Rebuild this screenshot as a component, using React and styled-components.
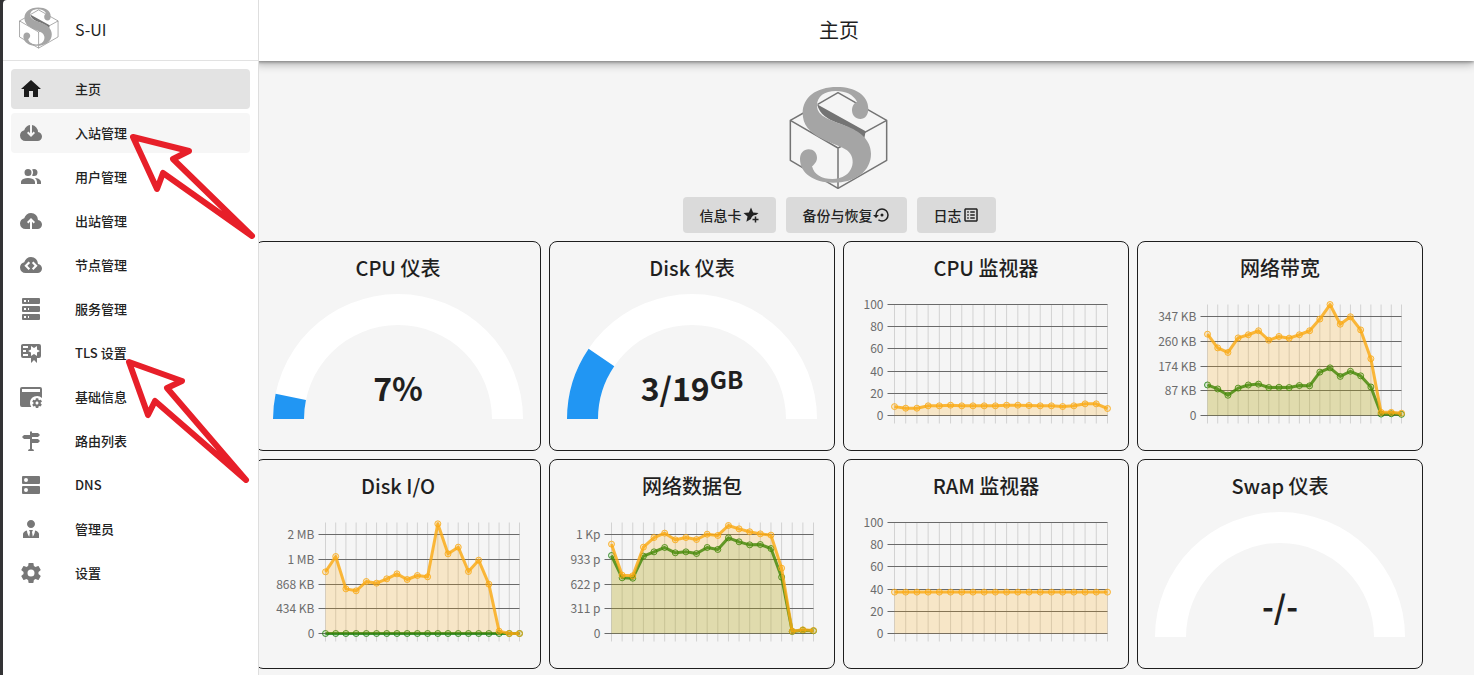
import React from "react";
import styled, { createGlobalStyle } from "styled-components";

const GlobalStyle = createGlobalStyle`
  *, *::before, *::after { box-sizing: border-box; }
  body {
    margin: 0;
    background: #f5f5f5;
    color: #1f1f1f;
    font-family: "Noto Sans CJK SC", "Noto Sans", sans-serif;
  }
`;

const Shell = styled.div`
  position: relative;
  display: flex;
  min-height: 100vh;
  padding-left: 3px;
  background: #333335;
`;

const Sidebar = styled.aside`
  position: relative;
  z-index: 2;
  flex: 0 0 256px;
  background: #fff;
  border-right: 1px solid #dedede;
  border-top-left-radius: 4px;
`;

const Brand = styled.div`
  display: flex;
  align-items: center;
  gap: 16px;
  height: 61px;
  padding: 0 16px 4px;
  border-bottom: 1px solid #e2e2e2;
  font-size: 16px;
  line-height: 24px;
`;

const BrandMark = styled.span`
  display: flex;
  width: 40px;

  svg { width: 40px; height: 42px; }
`;

const BrandName = styled.span`
  padding-top: 2px;
`;

const Nav = styled.nav`
  display: flex;
  flex-direction: column;
  gap: 4px;
  padding: 8px;
`;

const NavLink = styled.a`
  display: flex;
  align-items: center;
  gap: 32px;
  height: 40px;
  padding: 0 8px;
  border-radius: 4px;
  background: ${(p) => (p.$state === "active" ? "#e3e3e3" : p.$state === "hover" ? "#f6f6f6" : "transparent")};
  color: #222;
  font-size: 13px;
  font-weight: 500;
  line-height: 20px;
  text-decoration: none;

  svg { color: ${(p) => (p.$state === "active" ? "#1c1c1c" : "#777")}; }
`;

const IconSvg = styled.svg`
  flex: none;
  width: ${(p) => p.$size}px;
  height: ${(p) => p.$size}px;
  fill: currentColor;
  fill-rule: evenodd;
`;

const Content = styled.div`
  flex: 1;
  min-width: 0;
  margin-left: -4px;
  background: #f5f5f5;
`;

const TopBar = styled.header`
  position: relative;
  display: flex;
  align-items: center;
  justify-content: center;
  height: 61px;
  padding: 0 51px 2px 0;
  background: #fff;
  box-shadow: 0 1px 3px rgba(0, 0, 0, 0.35), 0 3px 9px rgba(0, 0, 0, 0.3);
`;

const PageTitle = styled.h1`
  margin: 0;
  font-size: 20px;
  font-weight: 400;
  line-height: 28px;
`;

const Main = styled.main`
  display: flex;
  flex-direction: column;
  align-items: center;
  gap: 8px;
  padding: 26px 51px 6px 0;
`;

const HeroLogo = styled.div`
  display: flex;

  svg { width: 100px; height: 102px; }
`;

const Actions = styled.div`
  display: flex;
  gap: 10px;
`;

const ActionButton = styled.button`
  display: flex;
  align-items: center;
  height: 36px;
  padding: 0 16px 0 17px;
  border: 0;
  border-radius: 4px;
  background: #dadada;
  color: #222;
  font: 500 14px/20px "Noto Sans CJK SC", sans-serif;
`;

const Grid = styled.div`
  align-self: stretch;
  display: grid;
  grid-template-columns: repeat(4, minmax(0, 1fr));
  gap: 8px;
`;

const Card = styled.section`
  border: 1px solid #1e1e1e;
  border-radius: 8px;
  padding-top: 10px;
`;

const CardTitle = styled.h2`
  margin: 0;
  font-size: 20px;
  font-weight: 500;
  line-height: 32px;
  text-align: center;
`;

const Figure = styled.svg`
  display: block;
  width: 100%;
  height: auto;
`;

const AxisLabel = styled.text`
  font-size: 12px;
  fill: #6c6c6c;
  text-anchor: end;
`;

const GaugeValue = styled.text`
  font-size: 32px;
  font-weight: 700;
  fill: #1f1f1f;
  text-anchor: middle;
`;

const GaugeUnit = styled.tspan`
  font-size: 24px;
`;

const Annotations = styled.svg`
  position: absolute;
  z-index: 3;
  top: 0;
  left: 0;
  width: 260px;
  height: 500px;
  pointer-events: none;
  fill: none;
  stroke: #e71f29;
  stroke-width: 6;
  stroke-linejoin: round;
`;

const icons = {
  home: "M10,20V14H14V20H19V12H22L12,3L2,12H5V20H10Z",
  download:
    "M6.5 20Q4.22 20 2.61 18.43 1 16.85 1 14.58 1 12.63 2.17 11.1 3.35 9.57 5.25 9.15 5.83 7.13 7.39 5.75 8.95 4.38 11 4.08V12.15L9.4 10.6L8 12L12 16L16 12L14.6 10.6L13 12.15V4.08Q15.58 4.43 17.29 6.39 19 8.35 19 11 20.73 11.2 21.86 12.5 23 13.78 23 15.5 23 17.38 21.69 18.69 20.38 20 18.5 20Z",
  users:
    "M16 17V19H2V17S2 13 9 13 16 17 16 17M12.5 7.5A3.5 3.5 0 1 0 9 11A3.5 3.5 0 0 0 12.5 7.5M15.94 13A5.32 5.32 0 0 1 18 17V19H22V17S22 13.37 15.94 13M15 4A3.39 3.39 0 0 0 13.07 4.59A5 5 0 0 1 13.07 10.41A3.39 3.39 0 0 0 15 11A3.5 3.5 0 0 0 15 4Z",
  upload:
    "M11 20H6.5Q4.22 20 2.61 18.43 1 16.85 1 14.58 1 12.63 2.17 11.1 3.35 9.57 5.25 9.15 5.88 6.85 7.75 5.43 9.63 4 12 4 14.93 4 16.96 6.04 19 8.07 19 11 20.73 11.2 21.86 12.5 23 13.78 23 15.5 23 17.38 21.69 18.69 20.38 20 18.5 20H13V12.85L14.6 14.4L16 13L12 9L8 13L9.4 14.4L11 12.85Z",
  tags:
    "M6.5 20Q4.22 20 2.61 18.43 1 16.85 1 14.58 1 12.63 2.17 11.1 3.35 9.57 5.25 9.15 5.88 6.85 7.75 5.43 9.63 4 12 4 14.93 4 16.96 6.04 19 8.07 19 11 20.73 11.2 21.86 12.5 23 13.78 23 15.5 23 17.38 21.69 18.69 20.38 20 18.5 20ZM9.6 8.5L5.4 12.7 9.6 16.9 11.1 15.4 8.4 12.7 11.1 10ZM14.4 8.5L12.9 10 15.6 12.7 12.9 15.4 14.4 16.9 18.6 12.7Z",
  server:
    "M4,1H20A1,1 0 0,1 21,2V6A1,1 0 0,1 20,7H4A1,1 0 0,1 3,6V2A1,1 0 0,1 4,1M4,9H20A1,1 0 0,1 21,10V14A1,1 0 0,1 20,15H4A1,1 0 0,1 3,14V10A1,1 0 0,1 4,9M4,17H20A1,1 0 0,1 21,18V22A1,1 0 0,1 20,23H4A1,1 0 0,1 3,22V18A1,1 0 0,1 4,17M9,5H10V3H9V5M9,13H10V11H9V13M9,21H10V19H9V21M5,3V5H7V3H5M5,11V13H7V11H5M5,19V21H7V19H5Z",
  certificate:
    "M4,3C2.89,3 2,3.89 2,5V15A2,2 0 0,0 4,17H12V22L15,19L18,22V17H20A2,2 0 0,0 22,15V8L22,6V5A2,2 0 0,0 20,3H16V3H4M12,5L15,7L18,5V8.5L21,10L18,11.5V15L15,13L12,15V11.5L9,10L12,8.5V5M4,5H9V7H4V5M4,9H7V11H4V9M4,13H9V15H4V13Z",
  appCog:
    "M21.7 18.6V17.6L22.8 16.8C22.9 16.7 23 16.6 22.9 16.5L21.9 14.8C21.9 14.7 21.7 14.7 21.6 14.7L20.4 15.2C20.1 15 19.8 14.8 19.5 14.7L19.3 13.4C19.3 13.3 19.2 13.2 19.1 13.2H17.1C16.9 13.2 16.8 13.3 16.8 13.4L16.6 14.7C16.3 14.9 16.1 15 15.8 15.2L14.6 14.7C14.5 14.7 14.4 14.7 14.3 14.8L13.3 16.5C13.3 16.6 13.3 16.7 13.4 16.8L14.5 17.6V18.6L13.4 19.4C13.3 19.5 13.2 19.6 13.3 19.7L14.3 21.4C14.4 21.5 14.5 21.5 14.6 21.5L15.8 21C16 21.2 16.3 21.4 16.6 21.5L16.8 22.8C16.9 22.9 17 23 17.1 23H19.1C19.2 23 19.3 22.9 19.3 22.8L19.5 21.5C19.8 21.3 20 21.2 20.3 21L21.5 21.4C21.6 21.4 21.7 21.4 21.8 21.3L22.8 19.6C22.9 19.5 22.9 19.4 22.8 19.4L21.7 18.6M18 19.5C17.2 19.5 16.5 18.8 16.5 18S17.2 16.5 18 16.5 19.5 17.2 19.5 18 18.8 19.5 18 19.5ZM3 2A2 2 0 0 0 1 4V20A2 2 0 0 0 3 22H12.3A7 7 0 0 1 11 18A7 7 0 0 1 23 13.1V4A2 2 0 0 0 21 2ZM3 4H21V7H3Z",
  routes:
    "M11,10H5L3,8L5,6H11V3L12,2L13,3V4H19L21,6L19,8H13V10H19L21,12L19,14H13V20A2,2 0 0,1 15,22H9A2,2 0 0,1 11,20V10Z",
  dns:
    "M7,9A2,2 0 0,1 5,7A2,2 0 0,1 7,5A2,2 0 0,1 9,7A2,2 0 0,1 7,9M20,3H4A1,1 0 0,0 3,4V10A1,1 0 0,0 4,11H20A1,1 0 0,0 21,10V4A1,1 0 0,0 20,3M7,19A2,2 0 0,1 5,17A2,2 0 0,1 7,15A2,2 0 0,1 9,17A2,2 0 0,1 7,19M20,13H4A1,1 0 0,0 3,14V20A1,1 0 0,0 4,21H20A1,1 0 0,0 21,20V14A1,1 0 0,0 20,13Z",
  admin:
    "M12 3C14.21 3 16 4.79 16 7S14.21 11 12 11 8 9.21 8 7 9.79 3 12 3M16 13.54C16 14.6 15.72 17.07 13.81 19.83L13 15L13.94 13.12C13.32 13.05 12.67 13 12 13S10.68 13.05 10.06 13.12L11 15L10.19 19.83C8.28 17.07 8 14.6 8 13.54C5.61 14.24 4 15.5 4 17V21H20V17C20 15.5 18.4 14.24 16 13.54Z",
  cog:
    "M12,15.5A3.5,3.5 0 0,1 8.5,12A3.5,3.5 0 0,1 12,8.5A3.5,3.5 0 0,1 15.5,12A3.5,3.5 0 0,1 12,15.5M19.43,12.97C19.47,12.65 19.5,12.33 19.5,12C19.5,11.67 19.47,11.34 19.43,11L21.54,9.37C21.73,9.22 21.78,8.95 21.66,8.73L19.66,5.27C19.54,5.05 19.27,4.96 19.05,5.05L16.56,6.05C16.04,5.66 15.5,5.32 14.87,5.07L14.5,2.42C14.46,2.18 14.25,2 14,2H10C9.75,2 9.54,2.18 9.5,2.42L9.13,5.07C8.5,5.32 7.96,5.66 7.44,6.05L4.95,5.05C4.73,4.96 4.46,5.05 4.34,5.27L2.34,8.73C2.21,8.95 2.27,9.22 2.46,9.37L4.57,11C4.53,11.34 4.5,11.67 4.5,12C4.5,12.33 4.53,12.65 4.57,12.97L2.46,14.63C2.27,14.78 2.21,15.05 2.34,15.27L4.34,18.73C4.46,18.95 4.73,19.03 4.95,18.95L7.44,17.94C7.96,18.34 8.5,18.68 9.13,18.93L9.5,21.58C9.54,21.82 9.75,22 10,22H14C14.25,22 14.46,21.82 14.5,21.58L14.87,18.93C15.5,18.67 16.04,18.34 16.56,17.94L19.05,18.95C19.27,19.03 19.54,18.95 19.66,18.73L21.66,15.27C21.78,15.05 21.73,14.78 21.54,14.63L19.43,12.97Z",
  starPlus:
    "M5.8 21L7.4 14L2 9.2L9.2 8.6L12 2L14.8 8.6L22 9.2L18.8 12H18C14.9 12 12.4 14.3 12 17.3L5.8 21M17 14V17H14V19H17V22H19V19H22V17H19V14H17Z",
  restore:
    "M12,3A9,9 0 0,0 3,12H0L4,16L8,12H5A7,7 0 0,1 12,5A7,7 0 0,1 19,12A7,7 0 0,1 12,19C10.5,19 9.09,18.5 7.94,17.7L6.5,19.14C8.04,20.3 9.94,21 12,21A9,9 0 0,0 21,12A9,9 0 0,0 12,3M14,12A2,2 0 0,0 12,10A2,2 0 0,0 10,12A2,2 0 0,0 12,14A2,2 0 0,0 14,12Z",
  list:
    "M11 15H17V17H11V15M9 7H7V9H9V7M11 13H17V11H11V13M11 9H17V7H11V9M9 11H7V13H9V11M21 5V19C21 20.1 20.1 21 19 21H5C3.9 21 3 20.1 3 19V5C3 3.9 3.9 3 5 3H19C20.1 3 21 3.9 21 5M19 5H5V19H19V5M9 15H7V17H9V15Z",
};

function Icon({ name, size = 24 }) {
  return (
    <IconSvg $size={size} viewBox="0 0 24 24" aria-hidden="true">
      <path d={icons[name]} />
    </IconSvg>
  );
}

function Logo() {
  return (
    <svg viewBox="386 80 300 306" role="img" aria-label="S-UI">
      <g fill="none" stroke="#747474" strokeWidth="4.5" strokeLinejoin="round">
        <path d="M472 132L533 97L679 180V300L533 384L390 300V180L440 152" />
        <path d="M390 180L533 263V384M533 263L550 254M612 217L679 180" />
      </g>
      <path fill="#747474" d="M470 132L616 213L612 234C592 212 560 198 532 188C502 177 478 163 470 132Z" />
      <path
        fill="#a5a5a5"
        d="M624 146C624 104 584 80 530 80C466 80 427 112 427 158C427 192 446 216 486 236C514 250 540 256 560 270C592 294 580 356 516 356C484 356 462 344 455 318C462 312 470 304 470 292C470 277 459 267 445 267C430 267 419 279 419 296C419 338 460 367 518 367C586 367 632 332 632 280C632 238 598 212 556 196C516 180 470 170 470 136C470 108 492 92 527 92C556 92 578 102 590 124C581 128 575 138 575 150C575 165 586 176 600 176C614 176 624 164 624 146Z"
      />
    </svg>
  );
}

// Drawing area shared by every card figure.
const VIEW = "0 0 284 166";
const RIGHT = 263.5;
const TOP = 20.5;
const BASE = 131.5;

const ORANGE = { line: "rgba(250,170,20,0.82)", fill: "rgba(255,165,0,0.19)" };
const GREEN = { line: "rgba(24,128,8,0.82)", fill: "rgba(60,160,40,0.15)" };

function LineChart({ left, ticks, step, pitch, series }) {
  const count = series[0].data.length;
  const xs = Array.from({ length: count }, (_, i) => left + (i * (RIGHT - left)) / (count - 1));
  const toY = (v) => BASE - (v / step) * pitch;
  return (
    <Figure viewBox={VIEW} role="img" aria-label="chart">
      {xs.map((x) => (
        <line key={x} x1={x} x2={x} y1={TOP} y2={BASE + 8} stroke="#d2d2d2" />
      ))}
      {ticks.map((label, i) => {
        const y = Math.round(BASE - i * pitch - 0.5) + 0.5;
        return (
          <g key={label}>
            <line x1={left - 7} x2={RIGHT} y1={y} y2={y} stroke="#6a6a6a" />
            <AxisLabel x={left - 11} y={y + 4.5}>{label}</AxisLabel>
          </g>
        );
      })}
      {series.map(({ tone, data }, i) => {
        const pts = data.map((v, k) => `${xs[k]},${toY(v)}`);
        return (
          <g key={i}>
            <polygon points={`${left},${BASE} ${pts.join(" ")} ${RIGHT},${BASE}`} fill={tone.fill} />
            <polyline points={pts.join(" ")} fill="none" stroke={tone.line} strokeWidth="3" strokeLinejoin="round" />
            {data.map((v, k) => (
              <circle key={k} cx={xs[k]} cy={toY(v)} r="3" fill={tone.fill} stroke={tone.line} />
            ))}
          </g>
        );
      })}
    </Figure>
  );
}

const CX = 142;
const CY = 135;

function ring(fraction) {
  const a = Math.PI * (1 - fraction);
  const at = (r) => `${CX + r * Math.cos(a)} ${CY - r * Math.sin(a)}`;
  return `M${CX - 125} ${CY}A125 125 0 0 1 ${at(125)}L${at(94)}A94 94 0 0 0 ${CX - 94} ${CY}Z`;
}

function Gauge({ fraction, value, unit }) {
  return (
    <Figure viewBox={VIEW} role="img" aria-label={value}>
      <path d={ring(1)} fill="#fff" />
      {fraction > 0 && <path d={ring(fraction)} fill="#2196f3" />}
      <GaugeValue x={CX} y="117">
        {value}
        {unit && <GaugeUnit dy="-12">{unit}</GaugeUnit>}
      </GaugeValue>
    </Figure>
  );
}

const percent = ["0", "20", "40", "60", "80", "100"];

const nav = [
  ["home", "主页", "active"],
  ["download", "入站管理", "hover"],
  ["users", "用户管理"],
  ["upload", "出站管理"],
  ["tags", "节点管理"],
  ["server", "服务管理"],
  ["certificate", "TLS 设置"],
  ["appCog", "基础信息"],
  ["routes", "路由列表"],
  ["dns", "DNS"],
  ["admin", "管理员"],
  ["cog", "设置"],
];

const actions = [
  ["信息卡", "starPlus"],
  ["备份与恢复", "restore"],
  ["日志", "list"],
];

const cards = [
  { title: "CPU 仪表", body: <Gauge fraction={0.065} value="7%" /> },
  { title: "Disk 仪表", body: <Gauge fraction={0.19} value="3/19" unit="GB" /> },
  {
    title: "CPU 监视器",
    body: (
      <LineChart
        left={50.5}
        ticks={percent}
        step={20}
        pitch={22.2}
        series={[
          { tone: ORANGE, data: [8, 6.6, 6.6, 8.7, 8.7, 9.3, 8.7, 8.7, 8.7, 8.7, 9.3, 9.3, 9, 8.7, 8.7, 8.1, 8.7, 10.5, 10.5, 6.3] },
        ]}
      />
    ),
  },
  {
    title: "网络带宽",
    body: (
      <LineChart
        left={69.5}
        ticks={["0", "87 KB", "174 KB", "260 KB", "347 KB"]}
        step={86.75}
        pitch={24.75}
        series={[
          { tone: GREEN, data: [107, 93, 71, 96, 107, 110, 98, 99, 98, 105, 104, 152, 167, 137, 155, 139, 100, 5, 6, 4] },
          { tone: ORANGE, data: [285, 237, 221, 272, 283, 297, 264, 277, 271, 283, 297, 338, 389, 320, 346, 300, 199, 11, 11, 8] },
        ]}
      />
    ),
  },
  {
    title: "Disk I/O",
    body: (
      <LineChart
        left={69.5}
        ticks={["0", "434 KB", "868 KB", "1 MB", "2 MB"]}
        step={434}
        pitch={24.75}
        series={[
          { tone: GREEN, data: Array(20).fill(0) },
          { tone: ORANGE, data: [1081, 1350, 783, 748, 912, 883, 959, 1046, 947, 1017, 994, 1923, 1397, 1514, 1087, 1286, 865, 41, 0, 0] },
        ]}
      />
    ),
  },
  {
    title: "网络数据包",
    body: (
      <LineChart
        left={61.5}
        ticks={["0", "311 p", "622 p", "933 p", "1 Kp"]}
        step={311}
        pitch={24.75}
        series={[
          { tone: GREEN, data: [980, 700, 695, 972, 1026, 1081, 1014, 1026, 1005, 1081, 1056, 1202, 1152, 1114, 1118, 1068, 708, 25, 42, 34] },
          { tone: ORANGE, data: [1123, 733, 725, 1085, 1206, 1261, 1177, 1206, 1181, 1248, 1232, 1357, 1315, 1278, 1252, 1236, 821, 29, 46, 38] },
        ]}
      />
    ),
  },
  {
    title: "RAM 监视器",
    body: (
      <LineChart left={50.5} ticks={percent} step={20} pitch={22.2} series={[{ tone: ORANGE, data: Array(20).fill(37.3) }]} />
    ),
  },
  { title: "Swap 仪表", body: <Gauge fraction={0} value="-/-" /> },
];

export default function App() {
  return (
    <Shell>
      <GlobalStyle />
      <Sidebar>
        <Brand>
          <BrandMark><Logo /></BrandMark>
          <BrandName>S-UI</BrandName>
        </Brand>
        <Nav>
          {nav.map(([icon, label, state]) => (
            <NavLink key={label} href="#" $state={state}>
              <Icon name={icon} />
              <span>{label}</span>
            </NavLink>
          ))}
        </Nav>
      </Sidebar>
      <Content>
        <TopBar>
          <PageTitle>主页</PageTitle>
        </TopBar>
        <Main>
          <HeroLogo><Logo /></HeroLogo>
          <Actions>
            {actions.map(([label, icon]) => (
              <ActionButton key={label} type="button">
                {label}
                <Icon name={icon} size={18} />
              </ActionButton>
            ))}
          </Actions>
          <Grid>
            {cards.map(({ title, body }) => (
              <Card key={title}>
                <CardTitle>{title}</CardTitle>
                {body}
              </Card>
            ))}
          </Grid>
        </Main>
      </Content>
      <Annotations viewBox="0 0 260 500" aria-hidden="true">
        <path d="M133 137L189 151L173 159L252 236L163 173L157 189Z" />
        <path d="M129 362L182 381L167 388L246 480L155 401L148 415Z" />
      </Annotations>
    </Shell>
  );
}
